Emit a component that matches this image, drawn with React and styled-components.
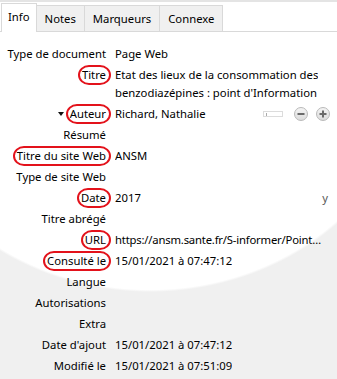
import React from 'react';
import styled, { createGlobalStyle } from 'styled-components';

const GlobalStyle = createGlobalStyle`
    html, body {
        margin: 0;
        padding: 0;
    }
    body {
        font-family: "Noto Sans", "Segoe UI", "Liberation Sans", sans-serif;
        font-size: 11.3px;
        color: #000;
        background: #f0f0f0;
    }
`;

const rows = [
    { label: 'Type de document', value: 'Page Web' },
    { label: 'Titre', value: ['Etat des lieux de la consommation des', 'benzodiazépines : point d\'Information'], mark: true },
    { label: 'Auteur', value: 'Richard, Nathalie', mark: true, author: true },
    { label: 'Résumé' },
    { label: 'Titre du site Web', value: 'ANSM', mark: true },
    { label: 'Type de site Web' },
    { label: 'Date', value: '2017', mark: true, extra: 'y' },
    { label: 'Titre abrégé' },
    { label: 'URL', value: 'https://ansm.sante.fr/S-informer/Point…', mark: true, tight: true },
    { label: 'Consulté le', value: '15/01/2021 à 07:47:12', mark: true },
    { label: 'Langue' },
    { label: 'Autorisations' },
    { label: 'Extra' },
    { label: 'Date d\'ajout', value: '15/01/2021 à 07:47:12' },
    { label: 'Modifié le', value: '15/01/2021 à 07:51:09' },
];

const tabs = ['Info', 'Notes', 'Marqueurs', 'Connexe'];

const App = () => {
    return (
        <Pane>
            <GlobalStyle />
            <TabBar>
                {tabs.map((t, i) => (
                    <Tab key={t} $active={i === 0}>{t}</Tab>
                ))}
            </TabBar>
            <Fields>
                {rows.map((r) => (
                    <React.Fragment key={r.label}>
                        <LabelCell>
                            {r.author && <Twisty />}
                            <Label $mark={r.mark}>{r.label}</Label>
                        </LabelCell>
                        <ValueCell>
                            <Lines>
                                {Array.isArray(r.value)
                                    ? r.value.map((line) => <Line key={line}>{line}</Line>)
                                    : <Line $tight={r.tight}>{r.value}</Line>}
                            </Lines>
                            {r.author && (
                                <Controls>
                                    <Mini />
                                    <RoundBtn>
                                        <svg width="8" height="8" viewBox="0 0 8 8">
                                            <rect x="0.5" y="3" width="7" height="2" fill="#6a6a6a" />
                                        </svg>
                                    </RoundBtn>
                                    <RoundBtn>
                                        <svg width="8" height="8" viewBox="0 0 8 8">
                                            <rect x="0.5" y="3" width="7" height="2" fill="#6a6a6a" />
                                            <rect x="3" y="0.5" width="2" height="7" fill="#6a6a6a" />
                                        </svg>
                                    </RoundBtn>
                                </Controls>
                            )}
                            {r.extra && <Extra>{r.extra}</Extra>}
                        </ValueCell>
                    </React.Fragment>
                ))}
            </Fields>
        </Pane>
    );
};

export default App;

const Pane = styled.div`
    width: 337px;
    height: 379px;
    overflow: hidden;
    box-sizing: border-box;
    border-top: 2px solid #e4e4e4;
    background-color: #f0f0f0;
    background-image: radial-gradient(268px 240px at 150px 50px, #ffffff 99%, #f0f0f0 100%);
`;

const TabBar = styled.div`
    display: flex;
    align-items: flex-end;
    height: 29px;
    padding-left: 1px;
    border-bottom: 1px solid #d9d9d9;
`;

const Tab = styled.div`
    box-sizing: border-box;
    height: ${(p) => (p.$active ? '29px' : '26px')};
    margin-bottom: ${(p) => (p.$active ? '-1px' : '0')};
    padding: 0 ${(p) => (p.$active ? '6px' : '8px')};
    display: flex;
    align-items: center;
    background: ${(p) => (p.$active ? '#fff' : '#f0f0f0')};
    border: 1px solid #d9d9d9;
    border-bottom: none;
    margin-left: ${(p) => (p.$active ? '0' : '-1px')};
    padding-bottom: ${(p) => (p.$active ? '3px' : '0')};
    white-space: nowrap;
`;

const Fields = styled.div`
    display: grid;
    grid-template-columns: 106px minmax(0, 1fr);
    column-gap: 9px;
    padding-top: 11px;
`;

const LabelCell = styled.div`
    display: flex;
    justify-content: flex-end;
    align-items: center;
    gap: 6px;
    height: 21px;
    white-space: nowrap;
`;

const Label = styled.span`
    position: relative;
    line-height: 18px;

    &::before {
        content: '';
        display: ${(p) => (p.$mark ? 'block' : 'none')};
        position: absolute;
        left: -4px;
        right: -5px;
        top: -1px;
        bottom: -1px;
        border: 2px solid #e3121b;
        border-radius: 11px / 10px;
    }
`;

const Twisty = styled.span`
    width: 0;
    height: 0;
    border-left: 3.5px solid transparent;
    border-right: 3.5px solid transparent;
    border-top: 4px solid #111;
    margin-top: 1px;
`;

const ValueCell = styled.div`
    display: flex;
    align-items: center;
    min-width: 0;
    min-height: 21px;
    padding: 1.5px 4px 1.5px 0;
    box-sizing: border-box;
`;

const Lines = styled.div`
    min-width: 0;
    overflow: hidden;
`;

const Line = styled.div`
    line-height: 18px;
    white-space: nowrap;
    letter-spacing: ${(p) => (p.$tight ? '-0.2px' : 'normal')};
`;

const Controls = styled.div`
    margin-left: auto;
    margin-right: 3px;
    display: flex;
    align-items: center;
    flex: none;
`;

const Mini = styled.div`
    width: 20px;
    height: 6px;
    border: 1px solid #dcdcdc;
    background: #fff;
    box-sizing: border-box;
    margin-right: 11px;
    position: relative;

    &::after {
        content: '';
        position: absolute;
        left: 2px;
        top: 1px;
        width: 1px;
        height: 3px;
        background: #aaa;
    }
`;

const RoundBtn = styled.div`
    width: 14px;
    height: 14px;
    border-radius: 50%;
    box-sizing: border-box;
    border: 1px solid #b9b9b9;
    background: linear-gradient(#f4f4f4, #dcdcdc);
    display: flex;
    align-items: center;
    justify-content: center;
    & + & {
        margin-left: 8px;
    }
`;

const Extra = styled.span`
    margin-left: auto;
    color: #5a5a5a;
    margin-right: 5px;
    flex: none;
`;
